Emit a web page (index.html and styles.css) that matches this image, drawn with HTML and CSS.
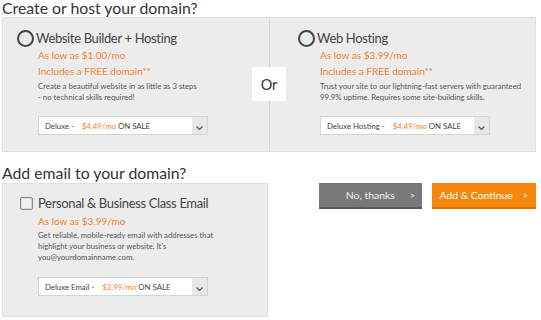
FILE: index.html
```html
<!DOCTYPE html>
<html>
<head>
<meta charset="utf-8">
<link rel="stylesheet" href="styles.css">
</head>
<body>
<div class="page">
  <h2 class="heading">Create or host your domain?</h2>
  <div class="panel panel-host">
    <div class="col">
      <div class="option-title"><span class="radio"></span>Website Builder + Hosting</div>
      <div class="body">
        <div class="price">As low as $1.00/mo</div>
        <div class="price">Includes a FREE domain**</div>
        <p class="desc">Create a beautiful website in as little as 3 steps<br>- no technical skills required!</p>
        <div class="select"><span class="sel-text">Deluxe -<span class="sel-price">$4.49/mo</span> ON SALE</span><span class="chev"><svg width="7" height="4" viewBox="0 0 7 4"><path d="M0.5 0.5l3 3 3-3" fill="none" stroke="#555" stroke-width="1.1"/></svg></span></div>
      </div>
    </div>
    <div class="divider"><span class="or">Or</span></div>
    <div class="col col-right">
      <div class="option-title"><span class="radio"></span>Web Hosting</div>
      <div class="body">
        <div class="price">As low as $3.99/mo</div>
        <div class="price">Includes a FREE domain**</div>
        <p class="desc">Trust your site to our lightning-fast servers with guaranteed<br>99.9% uptime. Requires some site-building skills.</p>
        <div class="select"><span class="sel-text">Deluxe Hosting -<span class="sel-price">$4.49/mo</span> ON SALE</span><span class="chev"><svg width="7" height="4" viewBox="0 0 7 4"><path d="M0.5 0.5l3 3 3-3" fill="none" stroke="#555" stroke-width="1.1"/></svg></span></div>
      </div>
    </div>
  </div>

  <h2 class="heading heading-2">Add email to your domain?</h2>
  <div class="row-email">
    <div class="panel panel-email">
      <div class="option-title"><span class="check"></span>Personal &amp; Business Class Email</div>
      <div class="body">
        <div class="price">As low as $3.99/mo</div>
        <p class="desc">Get reliable, mobile-ready email with addresses that<br>highlight your business or website. It's<br>you@yourdomainname.com.</p>
        <div class="select"><span class="sel-text">Deluxe Email -<span class="sel-price">$3.99/mo</span> ON SALE</span><span class="chev"><svg width="7" height="4" viewBox="0 0 7 4"><path d="M0.5 0.5l3 3 3-3" fill="none" stroke="#555" stroke-width="1.1"/></svg></span></div>
      </div>
    </div>
    <div class="actions">
      <button class="btn btn-gray">No, thanks<span class="arrow">&gt;</span></button>
      <button class="btn btn-orange">Add &amp; Continue<span class="arrow">&gt;</span></button>
    </div>
  </div>
</div>
</body>
</html>
```

FILE: styles.css
```css
html, body { margin: 0; padding: 0; background: #fff; }
body { font-family: Lato, "Noto Sans", sans-serif; color: #444; }
.page { width: 541px; padding: 0 0 0 2px; box-sizing: border-box; }
.heading { margin: 0 0 2px; font-weight: 400; font-size: 15.8px; line-height: 15px; color: #333; white-space: nowrap; }
.heading-2 { margin-top: 13px; margin-bottom: 3px; }
.panel { background: #ececec; border: 1px solid #e0e0e0; box-sizing: border-box; white-space: nowrap; }
.panel-host { width: 534px; height: 135px; display: flex; }
.col { width: 266px; padding: 11px 0 0 14px; box-sizing: border-box; }
.col-right { width: 265px; padding-left: 28px; }
.col-right .body { padding-left: 22px; }
.divider { width: 1px; background: #d6d6d6; position: relative; }
.or { position: absolute; left: -17px; top: 49px; width: 34px; height: 34px; background: #fff; font-size: 14.5px; display: flex; align-items: center; justify-content: center; color: #333; }
.option-title { display: flex; align-items: center; font-size: 13px; letter-spacing: -0.35px; line-height: 18px; height: 18px; color: #444; }
.radio { width: 13px; height: 13px; border: 2px solid #444; border-radius: 50%; margin-right: 2px; flex: none; }
.check { width: 11px; height: 11px; border: 1px solid #8a8a8a; border-radius: 2px; margin-right: 5px; flex: none; background: #f2f2f2; box-shadow: inset 0 0 0 1px #d8d8d8; }
.body { padding-left: 21px; }
.price { color: #f5822d; font-size: 10px; line-height: 16px; }
.desc { margin: 2px 0 0; font-size: 7.75px; line-height: 11px; color: #555; }
.select { margin-top: 13px; width: 170px; height: 19px; background: #fff; border: 1px solid #d4d4d4; box-sizing: border-box; display: flex; font-size: 7.8px; color: #444; }
.sel-text { flex: 1; padding-left: 6px; display: flex; align-items: center; white-space: pre; }
.sel-price { color: #f5822d; margin-left: 8px; }
.chev { width: 15px; background: #e7e7e7; display: flex; align-items: center; justify-content: center; padding-top: 5px; box-sizing: border-box; }
.row-email { display: flex; align-items: flex-start; }
.panel-email { width: 266px; height: 134px; padding: 10px 0 0 17px; }
.panel-email .body { padding-left: 18px; }
.panel-email .price { margin-top: 1px; }
.panel-email .desc { margin-top: 1px; }
.panel-email .select { margin-top: 14px; }
.actions { display: flex; gap: 10px; padding-left: 51px; }
.btn { height: 26px; border: none; border-bottom: 2px solid; font-family: inherit; font-size: 10.4px; color: #fff; display: flex; align-items: center; justify-content: flex-end; box-sizing: border-box; white-space: nowrap; }
.btn .arrow { font-size: 9px; }
.btn-gray { width: 103px; background: #787878; border-bottom-color: #5a5a5a; padding: 0 7px 0 0; color: #f2f2f2; }
.btn-gray .arrow { margin-left: 15px; }
.btn-orange { width: 104px; background: #f5870f; border-bottom-color: #e07208; padding: 0 8px 0 0; }
.btn-orange .arrow { margin-left: 10px; }
```
